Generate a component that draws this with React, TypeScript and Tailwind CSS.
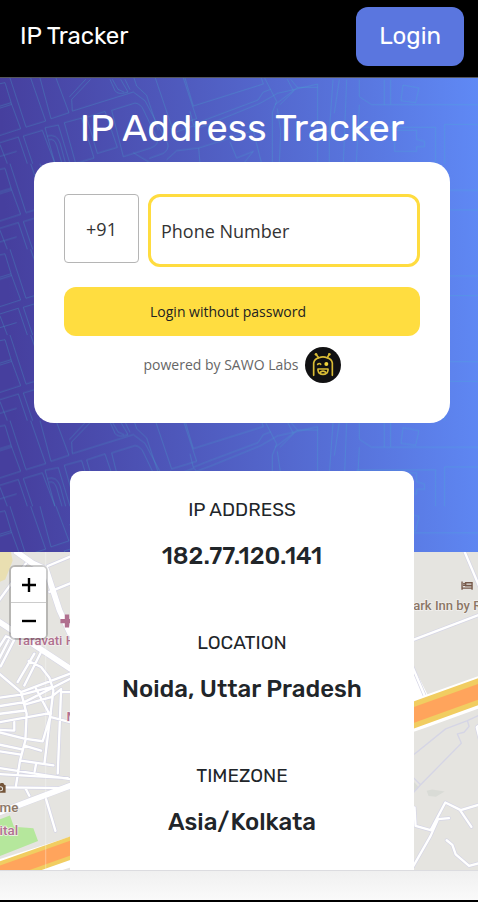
const display = "font-['Rubik','Roboto','Liberation_Sans',sans-serif]";
const formFont = "font-['Segoe_UI','Open_Sans','Noto_Sans',sans-serif]";

const details = [
  { label: 'IP ADDRESS', value: '182.77.120.141' },
  { label: 'LOCATION', value: 'Noida, Uttar Pradesh' },
  { label: 'TIMEZONE', value: 'Asia/Kolkata' },
];

/* Repeating street outline behind the hero. */
function StreetPattern() {
  return (
    <svg className="absolute inset-0 h-full w-full" aria-hidden="true">
      <defs>
        <linearGradient id="sky" x1="0" y1="0.04" x2="1" y2="0">
          <stop offset="0" stopColor="#463f9e" />
          <stop offset="0.5" stopColor="#5263c8" />
          <stop offset="1" stopColor="#5f89f5" />
        </linearGradient>
        <pattern id="streets" width="1434" height="257" patternUnits="userSpaceOnUse" patternTransform="scale(0.3333)">
          <g fill="none" stroke="#42b5cf" strokeWidth="2.2" strokeOpacity="0.36">
            <path d="M0 17L15 14L35 79L0 90M0 84L33 74M30 0L78 147L137 129L92 0M120 0L153 122L207 104L168 0M35 79L62 152L0 172M0 194L55 177L82 257M98 257L70 174L127 157L165 257M0 200L22 257" />
            <path d="M135 149L175 141L210 257M135 149L165 257M142 174Q170 166 180 195L197 257M147 185Q163 180 170 202L186 257M272 4L215 64L217 99L400 42L435 68L503 196Q508 215 490 226L448 241M257 4L208 57M193 134L245 120L282 240L227 256L193 134M260 118L315 100L352 208L292 226ZM335 97L405 75Q422 77 430 95L470 178Q480 200 452 210L370 236Z" />
            <path d="M330 4L345 38Q353 52 384 42L362 4M337 4L354 34L372 42M375 4L390 35M402 0L410 24L440 52L475 157M466 0L515 145L590 122L550 0M555 0L580 84L790 18L784 0M570 100L580 140L625 122L774 66L790 42L812 34M590 152L630 137L780 76L808 60L832 46L885 34L953 18V257M510 150L525 163L582 143L592 155M600 257L596 210L760 158L785 257M760 220L730 257" />
            <path d="M794 0L830 70L817 104V257M825 80L880 38L862 4M840 80L892 28L872 4M832 92L842 160L838 257M892 28L953 28M999 5L988 160V257M1018 5L1003 105M1040 5L1030 257M1078 5V56L1115 80H1434M1153 5V80M1172 5V79M1209 21L1257 30L1247 74L1203 68ZM1070 148H1307V257M1334 139V257M1334 139H1434M1184 157H1250V184L1274 190V206H1250V220H1184ZM1078 80L1069 257" />
            <path d="M0 235L50 220M400 224L455 257M500 245L530 218L596 210M690 192L710 240L760 220M953 160H988" />
          </g>
        </pattern>
      </defs>
      <rect width="100%" height="100%" fill="url(#sky)" />
      <rect width="100%" height="100%" fill="url(#streets)" />
    </svg>
  );
}

function CityMap() {
  return (
    <svg className="absolute inset-0 h-full w-full" viewBox="0 0 1434 951" preserveAspectRatio="xMidYMid slice" role="img" aria-label="Map of Noida, Uttar Pradesh">
      <rect width="1434" height="951" fill="#e5e4e0" />
      <g transform="translate(0 -36)">
        <path d="M0 36H35L40 62L18 118L0 126Z" fill="#e9dfb1" />
        <path d="M0 836L32 824L44 858L102 862L116 900L0 946Z" fill="#b5e79c" />
        <g fill="none" stroke="#d5d5e5" strokeLinecap="round" strokeLinejoin="round">
          <path strokeWidth="20" d="M52 36L100 70L140 88L180 210L212 280M0 245L212 385M0 815L212 735" />
          <path strokeWidth="11" d="M80 70L0 180M145 78L212 50M150 155L212 130M0 400L65 455L212 400M0 320L20 288L45 298L4 378M0 355L28 300M55 425L105 340M75 435L125 335M88 362L125 380L150 412L162 450L135 670M0 472L70 462L155 440M0 497L75 485L212 415M0 520L78 510M0 545L155 517L150 535L130 602L75 594L0 575M65 455L82 520L78 600L62 660L50 735M110 445L155 530L212 545M78 492L155 470L185 446L175 698M190 455H212M75 615L125 630M0 612L68 626M0 632L65 642M0 682L212 715M0 700L205 712M65 660L162 674M110 670L106 692M0 740L212 742M78 742L90 765M140 775L168 870M0 568L45 570V545" />
        </g>
        <g fill="none" stroke="#fff" strokeLinecap="round" strokeLinejoin="round">
          <path strokeWidth="17" d="M52 36L100 70L140 88L180 210L212 280M0 245L212 385M0 815L212 735" />
          <path strokeWidth="7" d="M80 70L0 180M145 78L212 50M150 155L212 130M0 400L65 455L212 400M0 320L20 288L45 298L4 378M0 355L28 300M55 425L105 340M75 435L125 335M88 362L125 380L150 412L162 450L135 670M0 472L70 462L155 440M0 497L75 485L212 415M0 520L78 510M0 545L155 517L150 535L130 602L75 594L0 575M65 455L82 520L78 600L62 660L50 735M110 445L155 530L212 545M78 492L155 470L185 446L175 698M190 455H212M75 615L125 630M0 612L68 626M0 632L65 642M0 682L212 715M0 700L205 712M65 660L162 674M110 670L106 692M0 740L212 742M78 742L90 765M140 775L168 870M0 568L45 570V545" />
          <path strokeWidth="88" d="M-60 1020L280 912" />
        </g>
        <path d="M-60 1018L280 898" stroke="#f1cd61" strokeWidth="66" />
        <path d="M-60 1018L280 898" stroke="#ffa45c" strokeWidth="42" />
        <path d="M139 36V987" stroke="#fff" strokeOpacity="0.5" strokeWidth="2" />
        <path d="M196 223H209V236H222V249H209V262H196V249H183V236H196Z" fill="#b0708f" />
        <path d="M-12 733H0L4 727H12L16 733H19V756H-12Z" fill="#75553a" />
        <circle cx="4" cy="744" r="6" fill="none" stroke="#e5e4e0" strokeWidth="3" />
        <g className="font-['Roboto','Noto_Sans',sans-serif] font-medium" fontSize="40" stroke="#f3f1ef" strokeWidth="4" paintOrder="stroke">
          <text x="50" y="315" fontSize="39" fill="#b0708f">Taravati H</text>
          <text x="201" y="541" fill="#b0708f">M</text>
          <text x="1" y="815" fill="#8b7766">me</text>
          <text x="1" y="881" fill="#b0708f">ital</text>
        </g>
      </g>
      <g transform="translate(1200 -36)">
        <path d="M78 750L95 746L132 752L106 768L84 766Z" fill="#d9dbd6" />
        <path d="M20 720L42 725L55 740L30 760Z" fill="#d9dbd6" />
        <path d="M42 385L25 440L42 510L82 465Z" fill="#fff" />
        <g fill="none" stroke="#d5d5e5" strokeLinecap="round" strokeLinejoin="round">
          <path strokeWidth="11" d="M192 36L240 150M30 302L240 222M32 370L72 465M42 800L45 855L90 868L134 785L180 808L240 790M30 990L90 885L112 835L145 832M178 808L212 858M138 898L155 912L165 940L205 975L240 965M240 550L228 560L238 600" />
          <path strokeWidth="4" d="M42 640L135 565L200 540L240 522M200 540L205 558L190 575L170 580L182 608L60 732L38 710M60 732L30 765" />
        </g>
        <g fill="none" stroke="#fff" strokeLinecap="round" strokeLinejoin="round">
          <path strokeWidth="7" d="M192 36L240 150M30 302L240 222M32 370L72 465M42 800L45 855L90 868L134 785L180 808L240 790M30 990L90 885L112 835L145 832M178 808L212 858M138 898L155 912L165 940L205 975L240 965M240 550L228 560L238 600" />
          <path strokeWidth="92" d="M-10 542L60 518L260 446" />
        </g>
        <path d="M-10 542L60 516L260 444" fill="none" stroke="#f1cd61" strokeWidth="76" />
        <path d="M-10 542L60 516L260 444" fill="none" stroke="#ffa45c" strokeWidth="44" />
        <path d="M184 124V149M184 144H214V149M214 144V136H187M195 128H214V137H195Z" fill="none" stroke="#755748" strokeWidth="4" />
        <circle cx="190" cy="131" r="3" fill="#755748" />
        <text x="38" y="209" fontSize="39" fill="#8b7766" stroke="#f3f1ef" strokeWidth="4" paintOrder="stroke" className="font-['Roboto','Noto_Sans',sans-serif] font-medium">ark Inn by R</text>
      </g>
    </svg>
  );
}

function RobotLogo() {
  return (
    <svg className="h-9 w-9 shrink-0" viewBox="0 0 108 108" aria-hidden="true">
      <circle cx="54" cy="54" r="54" fill="#111112" />
      <g fill="none" stroke="#d9bc35" strokeWidth="5" strokeLinecap="round" strokeLinejoin="round">
        <path d="M26 85V48Q28 36 42 32Q54 27 66 32Q80 36 82 48V85" />
        <path d="M41 32L34 23M67 32L72 23M38 52Q43 47 47 52" />
        <path d="M39 66H69V70Q67 82 54 82Q41 82 39 70ZM47 75Q54 70 61 75" />
      </g>
      <circle cx="33" cy="22" r="4" fill="#d9bc35" />
      <circle cx="73" cy="22" r="4" fill="#d9bc35" />
      <circle cx="64" cy="51" r="6" fill="#f0d43c" />
    </svg>
  );
}

export default function App() {
  return (
    <div className={`bg-black ${display}`}>
      <header className="flex items-start justify-between border-b border-[#55565c] bg-black pt-[7px] pr-3.5 pb-[11px] pl-5 text-2xl text-white">
        <a href="#home" className="pt-[13px] leading-8">IP Tracker</a>
        <button type="button" className="rounded-xl bg-[#5a76df] px-[23px] py-3 leading-[35px]">Login</button>
      </header>

      <main>
        <section className="relative pt-6 pr-7 pb-[129px] pl-[34px]">
          <StreetPattern />
          <div className="relative">
            <h1 className="pb-2 text-center text-[38px] leading-[52px] text-white">IP Address Tracker</h1>
            <form className={`rounded-[20px] bg-white px-[30px] pt-8 pb-10 ${formFont}`} onSubmit={(event) => event.preventDefault()}>
              <div className="flex items-start gap-[9px]">
                <input aria-label="Country code" defaultValue="+91" className="h-[69px] w-[75px] rounded border border-[#b5b5b5] text-center text-lg text-[#333] outline-none" />
                <input aria-label="Phone number" type="tel" placeholder="Phone Number" className="h-[73px] min-w-0 flex-1 rounded-xl border-[3px] border-[#ffdc3f] px-2.5 text-lg text-[#333] outline-none placeholder:text-[#333]" />
              </div>
              <button type="submit" className="mt-5 h-[49px] w-full rounded-xl bg-[#ffdd40] pr-7 text-sm text-[#222]">
                Login without password
              </button>
              <div className="mt-[11px] flex items-center justify-center gap-1.5 text-sm text-[#666]">
                <span>powered by SAWO Labs</span>
                <RobotLogo />
              </div>
            </form>
          </div>
        </section>

        <section className="relative flex pr-16 pl-[70px]">
          <CityMap />
          <div className="absolute top-[13px] left-[9px] z-10 flex w-[39px] flex-col rounded-md border-2 border-black/20 bg-clip-padding">
            <button type="button" aria-label="Zoom in" className="flex h-9 items-center justify-center rounded-t border-b border-[#ccc] bg-white">
              <svg className="h-4 w-4" viewBox="0 0 16 16" aria-hidden="true"><path d="M8 1V15M1 8H15" stroke="#000" strokeWidth="2.4" /></svg>
            </button>
            <button type="button" aria-label="Zoom out" className="flex h-[35px] items-center justify-center rounded-b bg-white">
              <svg className="h-4 w-4" viewBox="0 0 16 16" aria-hidden="true"><path d="M1 8H15" stroke="#000" strokeWidth="2.4" /></svg>
            </button>
          </div>
          <dl className="relative -mt-[81px] flex-1 rounded-t-xl bg-white text-center text-[#212529]">
            {details.map((detail) => (
              <div key={detail.label} className="pt-6 pb-8">
                <dt className="text-[19px] leading-[29px]">{detail.label}</dt>
                <dd className="mt-4 text-2xl leading-8 font-medium">{detail.value}</dd>
              </div>
            ))}
          </dl>
        </section>
      </main>

      <footer className="h-[30px] border-t border-[#dcdce0] bg-linear-to-b from-[#f0f0f0] to-[#fafafa]" />
      <div className="h-0.5 bg-black" />
    </div>
  );
}
